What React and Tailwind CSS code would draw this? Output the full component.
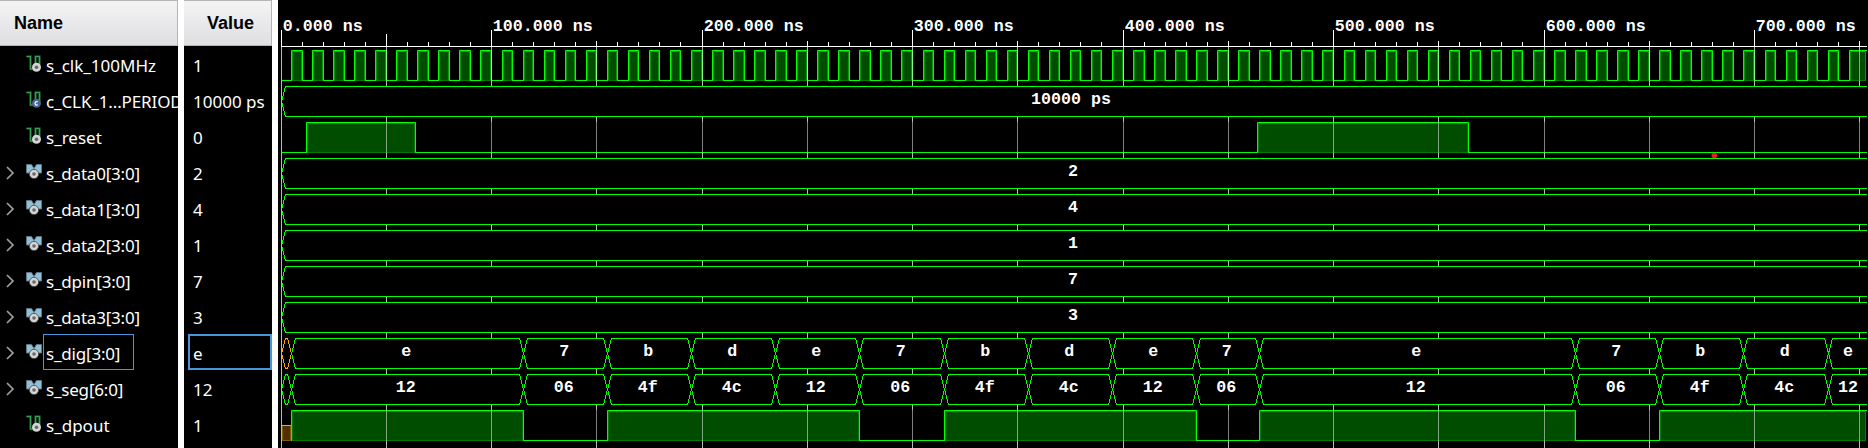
const GREEN = "#00ff00";
const ORANGE = "#ffa500";
const ORIGIN = 3;
const END = 1589;
const xAt = (t) => ORIGIN + Math.floor(t * 2.105 + 0.001);

const SIGNALS = [
  { name: "s_clk_100MHz", value: "1", kind: "bit" },
  { name: "c_CLK_1...PERIOD", value: "10000 ps", kind: "const" },
  { name: "s_reset", value: "0", kind: "bit" },
  { name: "s_data0[3:0]", value: "2", kind: "bus" },
  { name: "s_data1[3:0]", value: "4", kind: "bus" },
  { name: "s_data2[3:0]", value: "1", kind: "bus" },
  { name: "s_dpin[3:0]", value: "7", kind: "bus" },
  { name: "s_data3[3:0]", value: "3", kind: "bus" },
  { name: "s_dig[3:0]", value: "e", kind: "bus", selected: true },
  { name: "s_seg[6:0]", value: "12", kind: "bus" },
  { name: "s_dpout", value: "1", kind: "bit" },
];

const CONSTANT_BUSES = [
  { top: 86, text: "10000 ps", shift: -3 },
  { top: 158, text: "2", shift: -1 },
  { top: 194, text: "4", shift: -1 },
  { top: 230, text: "1", shift: -1 },
  { top: 266, text: "7", shift: -1 },
  { top: 302, text: "3", shift: -1 },
];

const SCAN_EDGES = [3, 13, 245, 329, 413, 497, 581, 666, 750, 834, 918, 981, 1297, 1381, 1465, 1550, END];
const DIG_VALUES = ["", "e", "7", "b", "d", "e", "7", "b", "d", "e", "7", "e", "7", "b", "d", "e"];
const SEG_VALUES = ["", "12", "06", "4f", "4c", "12", "06", "4f", "4c", "12", "06", "12", "06", "4f", "4c", "12"];

const CLOCK = Array.from({ length: 74 }, (_, i) => [xAt(i * 10 + 5), xAt(i * 10 + 10)]);
CLOCK.push([xAt(745), END - 1]);
const RESET = [[28, 137], [979, 1190]];
const DPOUT = [[13, 245], [329, 581], [666, 918], [981, 1297], [1381, END - 1]];

const TICKS = Array.from({ length: 76 }, (_, i) => i * 10);
const MAJOR = Array.from({ length: 8 }, (_, i) => i * 100);
const GRID = Array.from({ length: 16 }, (_, i) => i * 50);

const NAME_TRACKING = { bus: "tracking-[-0.2px]", const: "tracking-[-0.12px]", bit: "" };

function BitIcon({ constant }) {
  return (
    <svg width="16" height="18" viewBox="0 0 16 18" className="shrink-0">
      <path d="M0.5 1.5H4.5V14H9.5V1.5H13.5V10" fill="none" stroke="#1b4d28" strokeWidth="2.4" />
      <path d="M0.5 1.5H4.5V14H9.5V1.5H13.5V10" fill="none" stroke="#34a04f" strokeWidth="1.2" />
      <circle cx="10.5" cy="12.3" r="4.5" fill={constant ? "#4a6591" : "#d4d4d4"} />
      {constant ? (
        <path d="M11.8 11A1.7 1.7 0 1 0 11.8 13.6" fill="none" stroke="#fff" strokeWidth="1.2" />
      ) : (
        <circle cx="10.5" cy="12.3" r="1.8" fill="#666" />
      )}
    </svg>
  );
}

function BusIcon() {
  return (
    <svg width="16" height="18" viewBox="0 0 16 18" className="shrink-0">
      <path d="M0.5 1.5H5.5L8 5.5L10.5 1.5H15.5V10H0.5Z" fill="#8fc0da" stroke="#5f7480" strokeWidth="1" />
      <circle cx="8" cy="11" r="4.6" fill="#d4d4d4" stroke="#444" strokeWidth="0.8" />
      <circle cx="8" cy="11" r="1.8" fill="#666" />
    </svg>
  );
}

function Chevron() {
  return (
    <svg width="9" height="14" viewBox="0 0 9 14" className="shrink-0">
      <path d="M1 1L7 7L1 13" fill="none" stroke="#a0a0a0" strokeWidth="1.7" />
    </svg>
  );
}

function Header({ children, className }) {
  return (
    <div
      className={`h-[46px] shrink-0 border-t border-r border-b border-[#b4b4b4] bg-linear-to-b from-[#f4f4f5] to-[#dfdfe1] pt-[9px] font-['Liberation_Sans',sans-serif] text-[18px] leading-[27px] font-bold text-black ${className}`}
    >
      {children}
    </div>
  );
}

function NameRow({ signal }) {
  const isBus = signal.kind === "bus";
  return (
    <div className="flex h-[36px] items-center pl-[6px] whitespace-nowrap">
      <div className="w-[20px] shrink-0 pt-px">{isBus && <Chevron />}</div>
      {isBus ? <BusIcon /> : <BitIcon constant={signal.kind === "const"} />}
      <div
        className={`ml-px flex h-[36px] shrink-0 items-center border pt-[3px] pl-[2px] ${NAME_TRACKING[signal.kind]} ${
          signal.selected ? "w-[91px] border-[#4896d8]" : "border-transparent"
        }`}
      >
        {signal.name}
      </div>
    </div>
  );
}

function ValueRow({ signal }) {
  return (
    <div
      className={`ml-[4px] flex h-[36px] items-center border-2 pt-[3px] pl-[3px] whitespace-nowrap ${
        signal.selected ? "border-[#4896d8]" : "border-transparent"
      }`}
    >
      {signal.value}
    </div>
  );
}

function Label({ x, y, anchor = "start", children }) {
  return (
    <text x={x} y={y} textAnchor={anchor} fill="#fff" className="font-['Liberation_Mono',monospace] text-[16.66px] font-bold">
      {children}
    </text>
  );
}

/* A logic-high interval: translucent body, darker inner edge and bright outline. */
function High({ x1, x2, top, open }) {
  const narrow = x2 - x1 < 40;
  return (
    <g>
      <rect x={x1} y={top} width={x2 - x1 + (open ? 0 : 1)} height={31} fill={GREEN} fillOpacity={0.3} />
      <path
        d={`M${x1 + 1.5} ${top + 30.5}V${top + 1.5}H${x2 - 0.5}V${top + 30.5}`}
        fill="none"
        stroke={narrow ? "#009c00" : "#008c00"}
        strokeOpacity={narrow ? 1 : 0.8}
      />
      <rect x={x1 + 1} y={top + 30} width={x2 - x1 - 1} height={1} fill="#007a00" />
      <path d={`M${x1 + 0.5} ${top + 31}V${top + 0.5}H${open ? x2 + 1 : x2 + 0.5}${open ? "" : `V${top + 31}`}`} fill="none" stroke={GREEN} />
    </g>
  );
}

function BitWave({ top, highs, from = ORIGIN }) {
  const lows = [];
  let cursor = from;
  highs.forEach(([a, b]) => {
    if (a > cursor) lows.push([cursor, a]);
    cursor = b;
  });
  if (cursor < END - 1) lows.push([cursor, END]);
  return (
    <g>
      {highs.map(([a, b]) => (
        <High key={a} x1={a} x2={b} top={top} open={b >= END - 1} />
      ))}
      {lows.map(([a, b]) => (
        <rect key={a} x={a} y={top + 30} width={b - a + (b === END ? 0 : 1)} height={1} fill={GREEN} />
      ))}
    </g>
  );
}

function BusWave({ top, edges, values, shift, firstColor = GREEN }) {
  return (
    <g>
      {values.map((value, i) => {
        const b = edges[i + 1];
        const l = edges[i] + 0.5;
        const r = b + 0.5;
        const t = top + 0.5;
        const d =
          b >= END
            ? `M${END} ${t}H${l + 4}L${l} ${t + 15}L${l + 4} ${t + 30}H${END}`
            : `M${l} ${t + 15}L${l + 4} ${t}H${r - 4}L${r} ${t + 15}L${r - 4} ${t + 30}H${l + 4}Z`;
        return (
          <g key={edges[i]}>
            <path d={d} fill="#000" stroke={i === 0 ? firstColor : GREEN} shapeRendering="crispEdges" />
            {value && (
              <Label x={(edges[i] + b) / 2 + (edges[i] === 1550 ? 0.5 : shift)} y={top + 18} anchor="middle">
                {value}
              </Label>
            )}
          </g>
        );
      })}
    </g>
  );
}

function tickTop(t) {
  if (t % 100 === 0) return 30;
  if (t === 50) return 34;
  return t % 50 === 0 ? 41 : 42;
}

function Waveform() {
  return (
    <svg width="1590" height="448" viewBox="0 0 1590 448" className="shrink-0 bg-black">
      {TICKS.map((t) => (
        <rect key={t} x={xAt(t)} y={tickTop(t)} width={1} height={46 - tickTop(t)} fill="#fff" />
      ))}
      <rect x={3} y={46} width={1586} height={1} fill="#fff" />
      {MAJOR.map((t) => (
        <Label key={t} x={xAt(t) + 1.7} y={31}>{`${t}.000 ns`}</Label>
      ))}
      <BitWave top={50} highs={CLOCK} />
      <BitWave top={122} highs={RESET} />
      <rect x={4} y={426} width={9} height={15} fill="#503000" />
      <path d="M4.5 426V440.5H12.5V426" fill="none" stroke="#8a5a00" />
      <rect x={3} y={425} width={10} height={1} fill={ORANGE} />
      <BitWave top={410} from={13} highs={DPOUT} />
      {GRID.map((t) => (
        <rect key={t} x={xAt(t)} y={47} width={1} height={401} fill="#fff" fillOpacity={0.5} />
      ))}
      {GRID.map((t) => (
        <g key={t} fill="#fff" fillOpacity={0.45}>
          <rect x={xAt(t)} y={47} width={1} height={3} />
          <rect x={xAt(t)} y={81} width={1} height={41} />
          <rect x={xAt(t)} y={153} width={1} height={257} />
          <rect x={xAt(t)} y={441} width={1} height={7} />
        </g>
      ))}
      {CONSTANT_BUSES.map(({ top, text, shift }) => (
        <BusWave key={top} top={top} edges={[ORIGIN, END]} values={[text]} shift={shift} />
      ))}
      <BusWave top={338} edges={SCAN_EDGES} values={DIG_VALUES} shift={-0.8} firstColor={ORANGE} />
      <BusWave top={374} edges={SCAN_EDGES} values={SEG_VALUES} shift={-1.3} />
      <rect x={3} y={47} width={1} height={401} fill="#bababa" />
      <circle cx={1436.3} cy={155.5} r={2.8} fill="#e81c1c" />
    </svg>
  );
}

export default function App() {
  return (
    <div className="flex h-[448px] w-[1868px] overflow-hidden bg-white font-['Noto_Sans',sans-serif] text-[17px] text-white">
      <div className="mr-[6px] flex w-[178px] shrink-0 flex-col bg-black">
        <Header className="pl-[14px]">Name</Header>
        {SIGNALS.map((s) => (
          <NameRow key={s.name} signal={s} />
        ))}
      </div>
      <div className="mr-[6px] flex w-[88px] shrink-0 flex-col bg-black">
        <Header className="pl-[23px]">Value</Header>
        {SIGNALS.map((s) => (
          <ValueRow key={s.name} signal={s} />
        ))}
      </div>
      <Waveform />
    </div>
  );
}
